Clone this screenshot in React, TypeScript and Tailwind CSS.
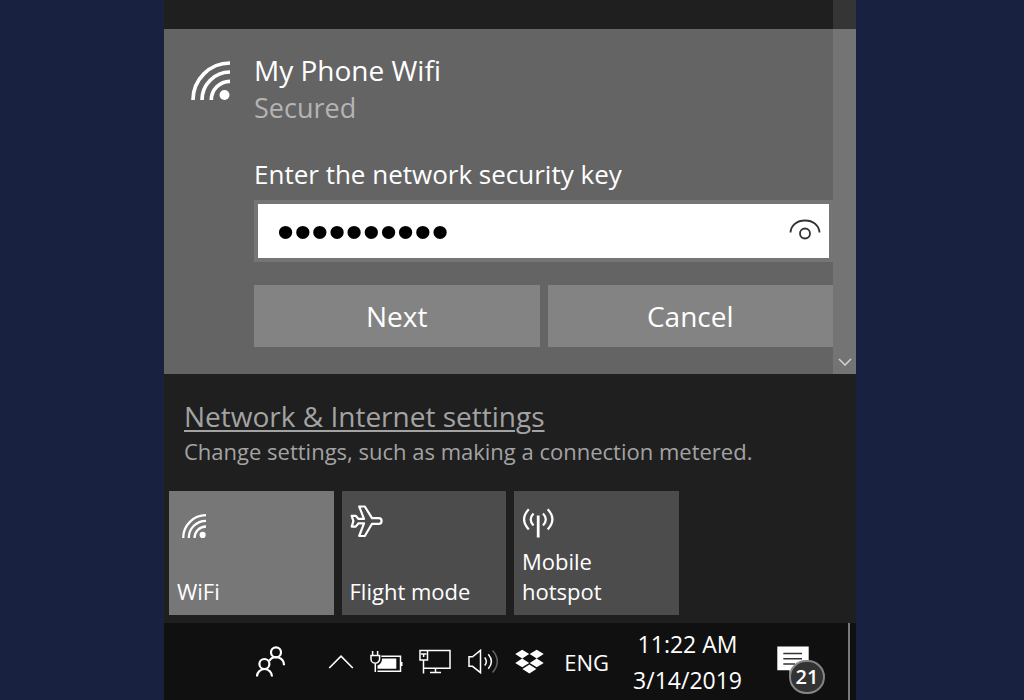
import type { ReactNode } from "react";

function WifiIcon({ className }: { className: string }) {
  return (
    <svg viewBox="0 0 39 39" className={className} fill="none" stroke="currentColor" strokeWidth="3.7">
      <path d="M2 39A37 37 0 0 1 39 2M11 39A28 28 0 0 1 39 11M20.3 39A18.7 18.7 0 0 1 39 20.3" />
      <circle cx="33.5" cy="34" r="5" fill="currentColor" stroke="none" />
    </svg>
  );
}

function PlaneIcon() {
  return (
    <svg viewBox="0 0 33 33" className="size-[33px]" fill="none" stroke="currentColor" strokeWidth="2.2" strokeLinejoin="round">
      <path d="M1.7 10.8H5.7L8.5 13.9H14L9.2 1.5H14.8L22 13.2H28.8A2.8 2.8 0 0 1 28.8 18.8H22L14.8 31H9.2L14 18.3H8.5L5.7 21.6H1.7L3.4 16.2Z" />
    </svg>
  );
}

function HotspotIcon() {
  return (
    <svg viewBox="0 0 31 30" className="h-[30px] w-[31px]" fill="none" stroke="currentColor" strokeWidth="2.2">
      <path d="M15.2 7.5V29.5" strokeWidth="2.8" />
      <path d="M10.5 5.5q-5.6 6 0 12M20 5.5q5.6 6 0 12M5.8 1.3q-9.4 10 0 20.2M24.7 1.3q9.4 10 0 20.2" />
    </svg>
  );
}

function PeopleIcon() {
  return (
    <svg viewBox="0 0 30 31" className="h-[31px] w-[30px]" fill="none" stroke="currentColor" strokeWidth="2.2">
      <circle cx="20" cy="6.3" r="5" />
      <path d="M13.3 14.8A8 8 0 0 1 28 19.3" />
      <circle cx="8.4" cy="18" r="5" />
      <path d="M1 30.5A7.5 7.5 0 0 1 16 30.5" />
    </svg>
  );
}

function BatteryIcon() {
  return (
    <svg viewBox="0 0 33 22" className="h-[22px] w-[33px]" fill="none" stroke="currentColor" strokeWidth="1.5">
      <path d="M2.6 0V4.5M7.6 0V4.5M1 4.5H9.6V8A4.3 4.3 0 0 1 1 8ZM5.3 12.3V21M11.3 5.3H30.5V20.3H7.5" />
      <path d="M31 11h1.5v4H31zM12 7.5H26.3V17.7H7.5V14.5Q12 13 12 7.5Z" fill="currentColor" stroke="none" />
    </svg>
  );
}

function EthernetIcon() {
  return (
    <svg viewBox="0 0 33 25" className="h-[25px] w-[33px]" fill="none" stroke="currentColor" strokeWidth="1.5">
      <path d="M1 1.5H8.5V11H1ZM8.5 1.5H31V19.3H4.5M4.5 11V24.5M16.5 19.3V23.5M11 23.5H22" />
      <path d="M2 5H7.5M4.6 5V8" />
    </svg>
  );
}

function VolumeIcon() {
  return (
    <svg viewBox="0 0 31 25" className="h-[25px] w-[31px]" fill="none" stroke="currentColor" strokeWidth="1.5">
      <path d="M1 7.8H4.5L12.5 1.3V23.7L4.5 17.3H1ZM16.7 8.5Q20 12.5 16.7 16.5M20.3 5.3Q26.5 12.5 20.3 19.7" />
      <path d="M24.6 1.5Q34 12.5 24.6 23.5" opacity="0.35" />
    </svg>
  );
}

function DropboxIcon() {
  return (
    <svg viewBox="0 0 29 25" className="h-[25px] w-[29px]" fill="currentColor">
      <path d="M7.2.8l7 4.3-7 4.3-7-4.3zM21.7.8l7 4.3-7 4.3-7-4.3zM7.2 9.6l7 4.3-7 4.3-7-4.3zM21.7 9.6l7 4.3-7 4.3-7-4.3zM14.4 15.6l7 4.4-7 4.4-7-4.4z" />
    </svg>
  );
}

function Tile({ label, icon, active }: { label: string; icon: ReactNode; active?: boolean }) {
  return (
    <button
      className={`flex h-[124px] flex-col justify-between pt-[15px] pr-8 pb-[9px] pl-2 text-left text-[22px] leading-[30px] ${
        active ? "bg-[#777777]" : "bg-[#4c4c4c]"
      }`}
    >
      <span className="flex h-8 w-[33px] items-end justify-center">{icon}</span>
      <span>{label}</span>
    </button>
  );
}

export default function App() {
  return (
    <div className="grid min-h-screen grid-cols-[minmax(0,164fr)_minmax(0,692fr)_minmax(0,168fr)] bg-[#192140] font-['Open_Sans','Noto_Sans',sans-serif] text-white">
      <main className="col-start-2 flex flex-col bg-[#1f1f1f]">
        <section className="relative pt-[29px]">
          <div className="flex bg-[#646464] pt-[22px] pr-[23px] pb-[27px]">
            <div className="w-[90px] shrink-0 pt-[10px] pl-[27px]">
              <WifiIcon className="size-[39px]" />
            </div>
            <form className="min-w-0 flex-1 text-[28px] leading-[38px]" onSubmit={(e) => e.preventDefault()}>
              <h1>My Phone Wifi</h1>
              <p className="text-[27px] text-[#b4b4b4]">Secured</p>
              <label htmlFor="key" className="mt-7 block text-[26px]">
                Enter the network security key
              </label>
              <div className="mt-[7px] flex h-[62px] items-center border-4 border-[#757575] bg-white text-[#333333]">
                <input
                  id="key"
                  type="password"
                  defaultValue="0123456789"
                  className="h-full min-w-0 flex-1 pl-[19px] font-['Liberation_Sans',sans-serif] text-[49px] text-black outline-none"
                />
                <button type="button" aria-label="Show key" className="mr-2">
                  <svg viewBox="0 0 32 24" className="h-6 w-8" fill="none" stroke="currentColor" strokeWidth="1.8">
                    <path d="M1.5 13.5C2 6 8 1.5 16 1.5S30 6 30.5 13.5" />
                    <circle cx="16" cy="14.5" r="5" />
                  </svg>
                </button>
              </div>
              <div className="mt-[23px] grid grid-cols-2 gap-2">
                <button className="h-[62px] bg-[#838383]">Next</button>
                <button type="button" className="h-[62px] bg-[#838383]">
                  Cancel
                </button>
              </div>
            </form>
          </div>
          <div className="absolute inset-y-0 right-0 flex w-[23px] items-end justify-center bg-white/10 pb-2">
            <svg viewBox="0 0 14 8" className="h-2 w-[14px]" fill="none" stroke="#d0d0d0" strokeWidth="1.6">
              <path d="M1 1L7 7L13 1" />
            </svg>
          </div>
        </section>

        <section className="flex-1 pt-[23px] pb-2">
          <div className="px-5 text-[#a3a3a3]">
            <a href="#" className="inline-block text-[28px] leading-[38px] underline decoration-2 underline-offset-3">
              Network &amp; Internet settings
            </a>
            <p className="text-[22px] leading-8">Change settings, such as making a connection metered.</p>
          </div>
          <div className="mt-6 grid grid-cols-4 gap-2 px-[5px]">
            <Tile label="WiFi" icon={<WifiIcon className="size-6" />} active />
            <Tile label="Flight mode" icon={<PlaneIcon />} />
            <Tile label="Mobile hotspot" icon={<HotspotIcon />} />
          </div>
        </section>

        <footer className="flex h-[77px] items-center justify-end bg-[#101010] pr-[6px] text-[22px] leading-9">
          <button aria-label="People" className="mr-[42px]">
            <PeopleIcon />
          </button>
          <div className="mr-5 flex items-center gap-4">
            <button aria-label="Show hidden icons">
              <svg viewBox="0 0 26 14" className="h-[14px] w-[26px]" fill="none" stroke="currentColor" strokeWidth="1.6">
                <path d="M1.2 13L13 1.2L24.8 13" />
              </svg>
            </button>
            <BatteryIcon />
            <EthernetIcon />
            <VolumeIcon />
            <DropboxIcon />
          </div>
          <button>ENG</button>
          <div className="ml-6 text-center text-[23px]">
            <p>11:22 AM</p>
            <p>3/14/2019</p>
          </div>
          <button aria-label="Notifications" className="relative mr-[39px] ml-[35px]">
            <svg viewBox="0 0 32 32" className="size-8">
              <path d="M.3.5H31.7V24.3H20L12.5 30V24.3H.3Z" fill="#fff" />
              <path d="M6.3 7.5H25M6.3 12.7H25M6.3 18H18" stroke="#333" strokeWidth="1.6" />
            </svg>
            <span className="absolute -right-4 -bottom-4 flex h-[34px] w-9 items-center justify-center rounded-full border-2 border-[#858585] bg-[#333333] text-[20px] font-semibold">
              21
            </span>
          </button>
          <div className="w-[2px] self-stretch bg-[#7a7a7a]" />
        </footer>
      </main>
    </div>
  );
}
